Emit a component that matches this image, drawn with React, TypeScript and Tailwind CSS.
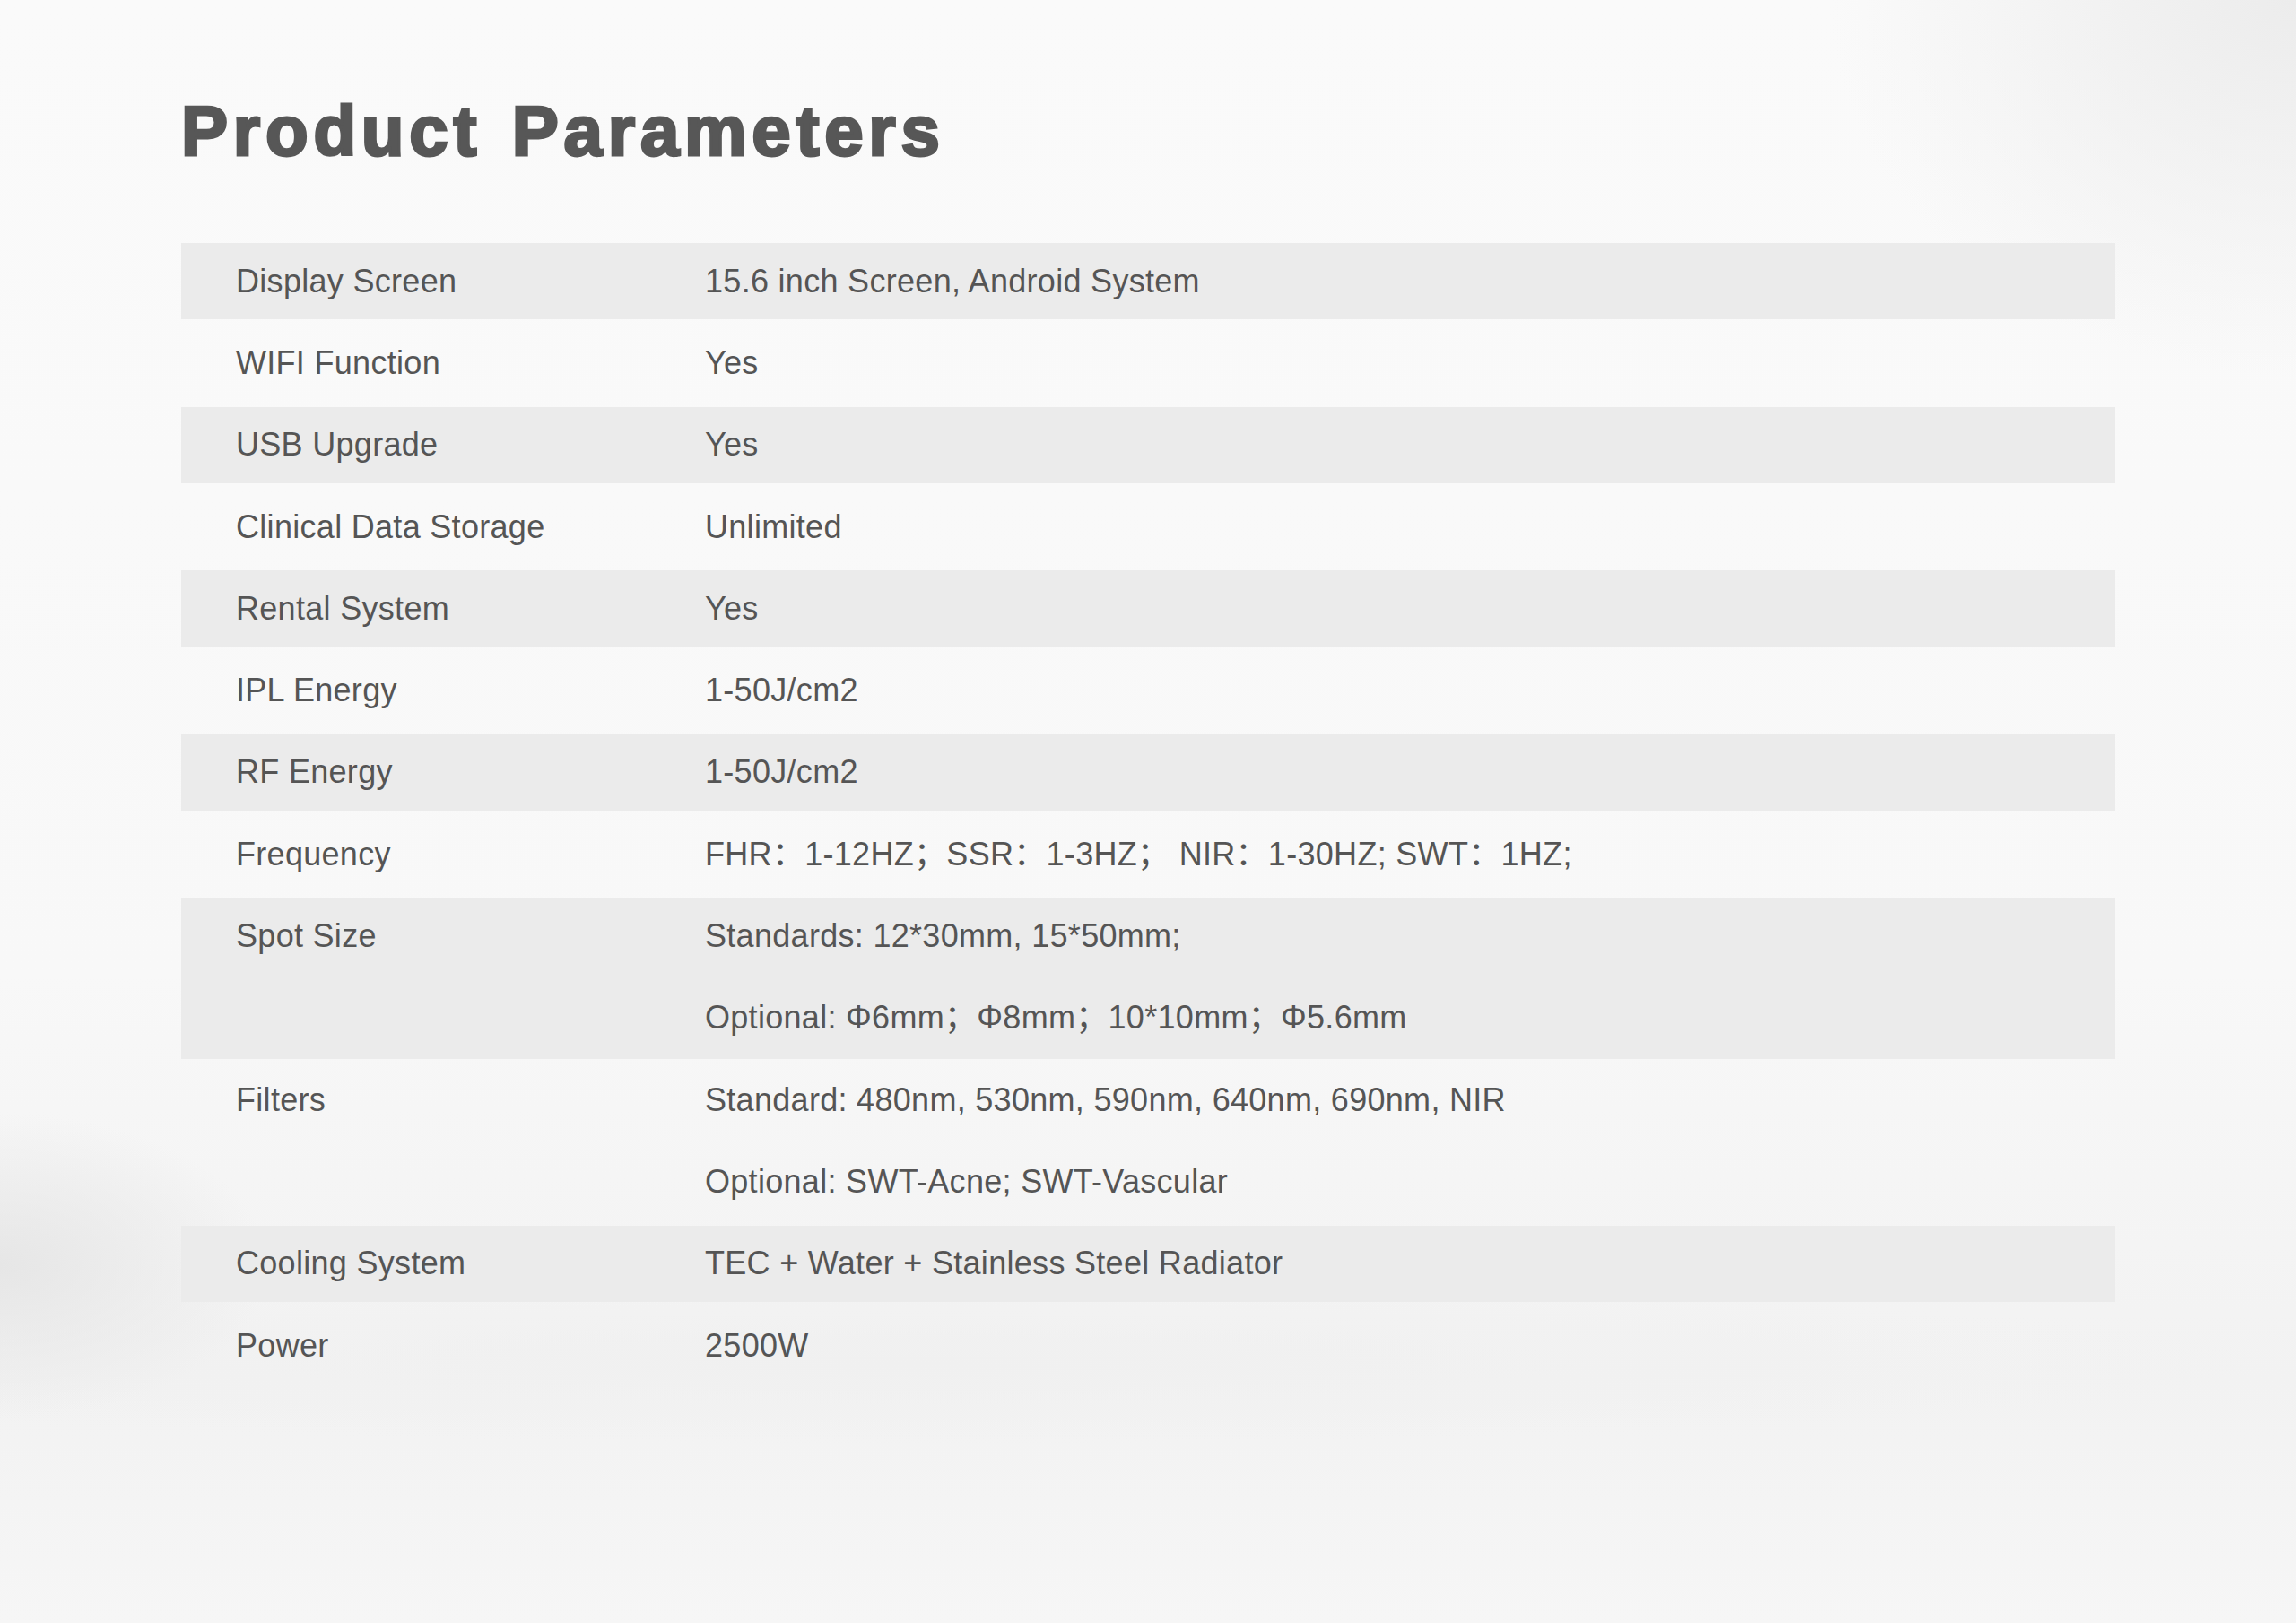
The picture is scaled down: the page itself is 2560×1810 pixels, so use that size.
import React from 'react';

type Param = { label: string; values: string[]; shaded: boolean };

const params: Param[] = [
  { label: 'Display Screen', values: ['15.6 inch Screen, Android System'], shaded: true },
  { label: 'WIFI Function', values: ['Yes'], shaded: false },
  { label: 'USB Upgrade', values: ['Yes'], shaded: true },
  { label: 'Clinical Data Storage', values: ['Unlimited'], shaded: false },
  { label: 'Rental System', values: ['Yes'], shaded: true },
  { label: 'IPL Energy', values: ['1-50J/cm2'], shaded: false },
  { label: 'RF Energy', values: ['1-50J/cm2'], shaded: true },
  {
    label: 'Frequency',
    values: ['FHR：1-12HZ；SSR：1-3HZ； NIR：1-30HZ; SWT：1HZ;'],
    shaded: false,
  },
  {
    label: 'Spot Size',
    values: ['Standards: 12*30mm, 15*50mm;', 'Optional: Φ6mm；Φ8mm；10*10mm；Φ5.6mm'],
    shaded: true,
  },
  {
    label: 'Filters',
    values: ['Standard: 480nm, 530nm, 590nm, 640nm, 690nm, NIR', 'Optional: SWT-Acne; SWT-Vascular'],
    shaded: false,
  },
  { label: 'Cooling System', values: ['TEC + Water + Stainless Steel Radiator'], shaded: true },
  { label: 'Power', values: ['2500W'], shaded: false },
];

const ParamRow = ({ item }: { item: Param }) => (
  <div
    className={`flex py-[3px] bg-clip-content ${item.shaded ? 'bg-[#ebebeb]' : 'bg-transparent'} ${
      item.values.length > 1 && item.shaded ? 'pb-0' : ''
    }`}
  >
    <div className={`flex w-full pl-[61px] ${item.values.length > 1 && item.shaded ? '-mt-[3px]' : '-my-[3px]'}`}>
      <div className="w-[523px] shrink-0">
        <p className="flex h-[91.3px] items-center">{item.label}</p>
      </div>
      <div className="flex flex-col">
        {item.values.map(v => (
          <p key={v} className="flex h-[91.3px] items-center whitespace-pre">
            {v}
          </p>
        ))}
      </div>
    </div>
  </div>
);

const App = () => {
  return (
    <div
      className="min-h-[1810px] w-full bg-[#f9f9f9] bg-[radial-gradient(ellipse_520px_420px_at_100%_0%,#ececec,transparent),radial-gradient(ellipse_300px_170px_at_0%_78%,#e6e6e6,transparent),radial-gradient(ellipse_1500px_90px_at_40%_84%,#f0f0f0,transparent),linear-gradient(180deg,#fafafa_0%,#f8f8f8_60%,#f2f2f2_85%,#f6f6f6_100%)] px-[202px] pt-[107px] text-[#555555]"
      style={{ fontFamily: '"Liberation Sans", "Noto Sans CJK SC", Arial, sans-serif' }}
    >
      <h1 className="text-[78px] leading-[78px] font-bold tracking-[5.8px] [word-spacing:6px] text-[#575757] [-webkit-text-stroke:3px_#575757]">
        Product Parameters
      </h1>
      <div className="mt-[83px] flex flex-col text-[36px] tracking-[0.3px]">
        {params.map(item => (
          <ParamRow key={item.label} item={item} />
        ))}
      </div>
    </div>
  );
};

export default App;
